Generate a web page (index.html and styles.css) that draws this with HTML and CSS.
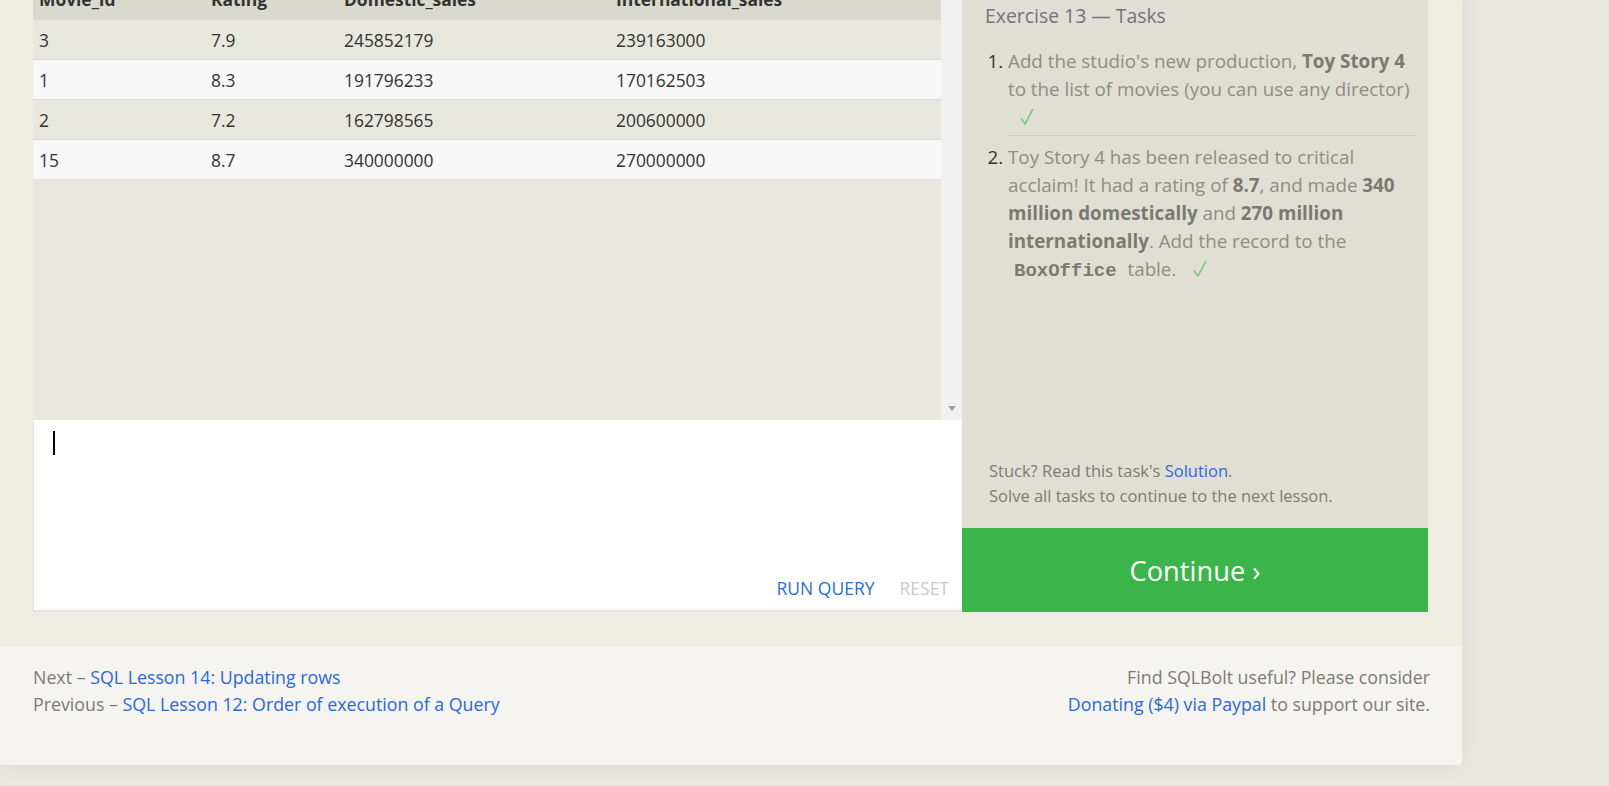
FILE: index.html
```html
<!DOCTYPE html>
<html>
<head>
<meta charset="utf-8">
<link rel="stylesheet" href="styles.css">
</head>
<body>
<div class="page">
  <div class="exercise">
    <div class="left">
      <div class="results">
        <div class="table-wrap">
          <table class="grid">
            <colgroup>
              <col class="c1"><col class="c2"><col class="c3"><col class="c4">
            </colgroup>
            <thead>
              <tr><th>Movie_Id</th><th>Rating</th><th>Domestic_sales</th><th>International_sales</th></tr>
            </thead>
            <tbody>
              <tr class="odd"><td>3</td><td>7.9</td><td>245852179</td><td>239163000</td></tr>
              <tr class="even"><td>1</td><td>8.3</td><td>191796233</td><td>170162503</td></tr>
              <tr class="odd"><td>2</td><td>7.2</td><td>162798565</td><td>200600000</td></tr>
              <tr class="even"><td>15</td><td>8.7</td><td>340000000</td><td>270000000</td></tr>
            </tbody>
          </table>
        </div>
        <div class="scrollbar"><span class="arrow"></span></div>
      </div>
      <div class="editor">
        <div class="caret-line"><span class="caret"></span></div>
        <div class="actions">
          <span class="run">RUN QUERY</span>
          <span class="reset">RESET</span>
        </div>
      </div>
    </div>
    <div class="right">
      <div class="tasks">
        <div class="title">Exercise 13 — Tasks</div>
        <ol class="task-list">
          <li>Add the studio's new production, <b>Toy Story 4</b> to the list of movies (you can use any director) <span class="check"><svg width="14" height="17" viewBox="0 0 14 17"><polyline points="1,10.5 5,16 13,1" fill="none" stroke="#76cc80" stroke-width="1.6"/></svg></span></li>
          <li>Toy Story 4 has been released to critical acclaim! It had a rating of <b>8.7</b>, and made <b>340 million domestically</b> and <b>270 million internationally</b>. Add the record to the <code>BoxOffice</code> table. <span class="check"><svg width="14" height="17" viewBox="0 0 14 17"><polyline points="1,10.5 5,16 13,1" fill="none" stroke="#76cc80" stroke-width="1.6"/></svg></span></li>
        </ol>
      </div>
      <div class="stuck">
        <div>Stuck? Read this task's <a class="link">Solution</a>.</div>
        <div>Solve all tasks to continue to the next lesson.</div>
      </div>
      <div class="continue">Continue ›</div>
    </div>
  </div>
  <div class="footer">
    <div class="nav">
      <div>Next – <a class="link">SQL Lesson 14: Updating rows</a></div>
      <div>Previous – <a class="link">SQL Lesson 12: Order of execution of a Query</a></div>
    </div>
    <div class="donate">
      <div>Find SQLBolt useful? Please consider</div>
      <div><a class="link">Donating ($4) via Paypal</a> to support our site.</div>
    </div>
  </div>
</div>
</body>
</html>
```
FILE: styles.css
```css
html, body {
  margin: 0;
  padding: 0;
}
body {
  background: #ebe7e3;
  font-family: "Open Sans", "Noto Sans", sans-serif;
  color: #777;
  overflow: hidden;
  height: 786px;
}
.page {
  width: 1462px;
  background: #efece4;
  box-shadow: 0 0 24px rgba(0, 0, 0, 0.07);
  border-radius: 0 0 4px 0;
}
.exercise {
  display: flex;
  padding: 0 34px 0 33px;
  margin-top: -21px;
}
.left {
  width: 929px;
  display: flex;
  flex-direction: column;
}
.results {
  height: 441px;
  display: flex;
  background: #e9e8e0;
}
.table-wrap {
  flex: 1;
}
.grid {
  width: 100%;
  border-collapse: collapse;
  font-size: 17.4px;
  color: #333;
}
.c1 { width: 172px; }
.c2 { width: 133px; }
.c3 { width: 272px; }
.grid th {
  background: #dad9cd;
  height: 40px;
  text-align: left;
  padding: 0 6px;
  font-weight: 700;
  color: #333;
}
.grid td {
  height: 39px;
  padding: 0 6px;
  border-top: 1px solid #dcdcd6;
}
.grid tr.odd td { background: #e9e8e0; }
.grid tr.even td { background: #f8f8f8; }
.scrollbar {
  width: 21px;
  background: #f1f1f1;
  display: flex;
  flex-direction: column;
  justify-content: flex-end;
  align-items: center;
  padding-bottom: 9px;
  box-sizing: border-box;
}
.arrow {
  width: 0;
  height: 0;
  border-left: 4.5px solid transparent;
  border-right: 4.5px solid transparent;
  border-top: 5px solid #a0a0a0;
}
.editor {
  height: 192px;
  background: #fff;
  border-left: 1px solid #e6e4dc;
  border-bottom: 2px solid #e6e4dc;
  box-sizing: border-box;
  display: flex;
  flex-direction: column;
  justify-content: space-between;
  padding: 11px 13px 10px 19px;
}
.caret {
  display: block;
  width: 2px;
  height: 24px;
  background: #000;
}
.actions {
  display: flex;
  justify-content: flex-end;
  gap: 25px;
  font-size: 17.5px;
}
.run { color: #2b6cd9; }
.reset { color: #c9c9c9; }
.right {
  width: 466px;
  background: #e1dfd4;
  display: flex;
  flex-direction: column;
}
.tasks {
  flex: 1;
  padding: 23px 0 0 23px;
}
.title {
  font-size: 19.4px;
  color: #707580;
  margin-bottom: 18px;
}
.task-list {
  margin: 0;
  padding: 0 11px 0 23px;
  font-size: 18.8px;
  line-height: 28px;
  color: #8e8c84;
}
.task-list li::marker {
  color: #333;
}
.task-list li:first-child {
  border-bottom: 1px solid #d2cfc4;
  padding-bottom: 4px;
  margin-bottom: 7px;
}
.task-list b {
  color: #7b7a72;
}
.task-list code {
  font-family: "Liberation Mono", "DejaVu Sans Mono", monospace;
  font-weight: 700;
  font-size: 19px;
  color: #7b7a72;
  padding: 0 6px;
}
.check {
  display: inline-block;
  margin-left: 12px;
  vertical-align: -1px;
}
.check svg {
  display: block;
}
.stuck {
  padding: 0 0 20px 27px;
  font-size: 16.5px;
  line-height: 25px;
  color: #7d7b74;
}
.link {
  color: #2a69d8;
  text-decoration: none;
}
.continue {
  height: 84px;
  background: #3bb54a;
  color: #fff;
  font-size: 27.3px;
  display: flex;
  align-items: center;
  justify-content: center;
}
.footer {
  margin-top: 34px;
  height: 119px;
  box-sizing: border-box;
  background: #f6f4f0;
  border-radius: 0 0 4px 4px;
  padding: 18px 32px 0 33px;
  display: flex;
  justify-content: space-between;
  font-size: 17.8px;
  line-height: 27px;
  color: #7d7b74;
}
.donate {
  text-align: right;
}
```
